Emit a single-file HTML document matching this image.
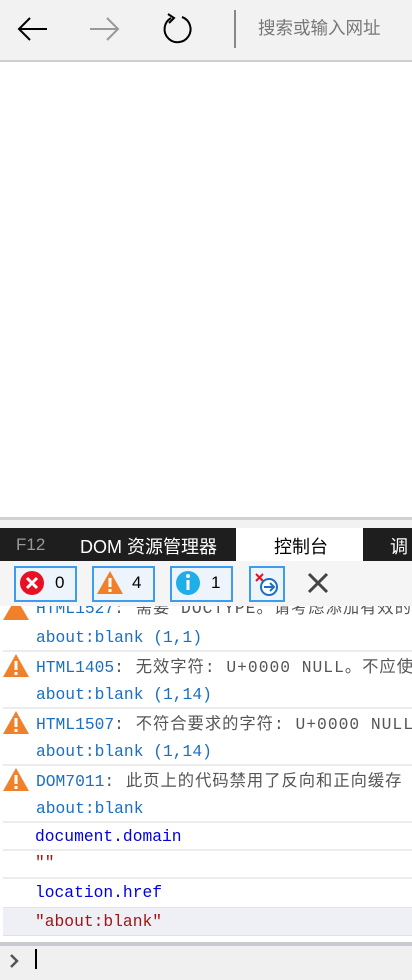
<!DOCTYPE html>
<html><head><meta charset="utf-8"><style>
*{margin:0;padding:0;box-sizing:border-box}
body{width:412px;height:980px;overflow:hidden;background:#fff;font-family:"Liberation Sans","Noto Sans CJK SC",sans-serif;position:relative}
.abs{position:absolute}
.mono{font-family:"Liberation Mono","Noto Sans CJK SC",monospace;font-size:16.3px;white-space:nowrap}
.blue{color:#1a6fc4}.dblue{color:#0000e0}.red{color:#a31515}.gray{color:#555;letter-spacing:1px}
.sep{position:absolute;left:3px;right:0;height:2px;background:#ececec}
.btn{position:absolute;top:566px;height:36px;border:2px solid #3b9cf0;background:#eef4fb}
</style></head><body>
<div class="abs" style="left:0;top:0;width:412px;height:62px;background:#f2f2f2;border-bottom:2px solid #cfcfcf"></div>
<svg class="abs" style="left:0;top:0" width="412" height="62">
<path d="M47 29H19M30 18L19 29L30 40" stroke="#000" stroke-width="2" fill="none"/>
<path d="M90 29H118M107 18L118 29L107 40" stroke="#999" stroke-width="2" fill="none"/>
<path d="M171 18A13 13 0 1 0 182 17" stroke="#000" stroke-width="2" fill="none"/>
<path d="M168 14L174 18L169 23" stroke="#000" stroke-width="2" fill="none"/>
<rect x="234" y="10" width="2" height="38" fill="#888"/>
</svg>
<div class="abs" style="left:258px;top:15px;font-size:17.5px;color:#777">搜索或输入网址</div>
<div class="abs" style="left:0;top:517px;width:412px;height:3px;background:#d0d0d0"></div>
<div class="abs" style="left:0;top:520px;width:412px;height:8px;background:#f2f2f2"></div>
<div class="abs" style="left:0;top:528px;width:412px;height:33px;background:#1e1e1e"></div>
<div class="abs" style="left:236px;top:528px;width:127px;height:33px;background:#fff"></div>
<div class="abs" style="left:16px;top:535px;font-size:17px;color:#999">F12</div>
<div class="abs" style="left:80px;top:533px;font-size:18px;color:#fff">DOM 资源管理器</div>
<div class="abs" style="left:274px;top:533px;font-size:18px;color:#000">控制台</div>
<div class="abs" style="left:390px;top:533px;font-size:18px;color:#fff">调试</div>
<div class="abs" style="left:0;top:561px;width:412px;height:45px;background:#f5f5f5"></div>
<div class="btn" style="left:14px;width:63px"></div>
<div class="btn" style="left:92px;width:63px"></div>
<div class="btn" style="left:170px;width:63px"></div>
<div class="btn" style="left:249px;width:36px"></div>
<svg class="abs" style="left:0;top:561px" width="412" height="45">
<circle cx="32" cy="22" r="12" fill="#e81123"/><path d="M27 17l10 10M37 17l-10 10" stroke="#fff" stroke-width="3"/>
<path d="M110 10L123 33H97Z" fill="#f0812a"/><rect x="108.5" y="17" width="3" height="9" fill="#fff"/><rect x="108.5" y="28" width="3" height="3" fill="#fff"/>
<circle cx="188" cy="22" r="12" fill="#1eaee8"/><rect x="186.5" y="19" width="3" height="10" fill="#fff"/><circle cx="188" cy="15" r="2" fill="#fff"/>
<path d="M256 13l7 7M263 13l-7 7" stroke="#e81123" stroke-width="2"/>
<circle cx="269" cy="26" r="8" fill="#fff" stroke="#1a6fc4" stroke-width="2"/><path d="M264 26h9M270 22l4 4-4 4" stroke="#1a6fc4" stroke-width="2" fill="none"/>
<path d="M309 13l18 18M327 13l-18 18" stroke="#444" stroke-width="3"/>
</svg>
<div class="abs" style="left:55px;top:573px;font-size:17px">0</div>
<div class="abs" style="left:132px;top:573px;font-size:17px">4</div>
<div class="abs" style="left:211px;top:573px;font-size:17px">1</div>
<div class="abs" style="left:0;top:606px;width:412px;height:336px;overflow:hidden">
<svg class="abs" style="left:0;top:0" width="30" height="300">
<path d="M16 -8L29 14H3Z" fill="#f0812a"/>
<path d="M16 48L29 71H3Z" fill="#f0812a"/><rect x="14.5" y="55" width="3" height="9" fill="#fff"/><rect x="14.5" y="66" width="3" height="3" fill="#fff"/>
<path d="M16 105L29 128H3Z" fill="#f0812a"/><rect x="14.5" y="112" width="3" height="9" fill="#fff"/><rect x="14.5" y="123" width="3" height="3" fill="#fff"/>
<path d="M16 162L29 185H3Z" fill="#f0812a"/><rect x="14.5" y="169" width="3" height="9" fill="#fff"/><rect x="14.5" y="180" width="3" height="3" fill="#fff"/>
</svg>
<div class="abs mono" style="left:36px;top:-12px"><span class="blue">HTML1527</span><span class="gray">: 需要 DOCTYPE。请考虑添加有效的</span></div>
<div class="abs mono blue" style="left:36px;top:22px">about:blank (1,1)</div>
<div class="sep" style="top:44px"></div>
<div class="abs mono" style="left:36px;top:47px"><span class="blue">HTML1405</span><span class="gray">: 无效字符: U+0000 NULL。不应使用</span></div>
<div class="abs mono blue" style="left:36px;top:79px">about:blank (1,14)</div>
<div class="sep" style="top:101px"></div>
<div class="abs mono" style="left:36px;top:104px"><span class="blue">HTML1507</span><span class="gray">: 不符合要求的字符: U+0000 NULL。</span></div>
<div class="abs mono blue" style="left:36px;top:136px">about:blank (1,14)</div>
<div class="sep" style="top:158px"></div>
<div class="abs mono" style="left:36px;top:161px"><span class="blue">DOM7011</span><span class="gray">: 此页上的代码禁用了反向和正向缓存</span></div>
<div class="abs mono blue" style="left:36px;top:193px">about:blank</div>
<div class="sep" style="top:215px"></div>
<div class="abs mono dblue" style="left:35px;top:221px">document.domain</div>
<div class="sep" style="top:243px"></div>
<div class="abs mono red" style="left:35px;top:247px">""</div>
<div class="sep" style="top:271px"></div>
<div class="abs mono dblue" style="left:35px;top:277px">location.href</div>
<div class="abs" style="left:3px;top:301px;width:409px;height:29px;background:#eef0f5;border-top:1px solid #e4e4e4;border-bottom:1px solid #e0e0e0"></div>
<div class="abs mono red" style="left:35px;top:306px">"about:blank"</div>
</div>
<div class="abs" style="left:0;top:942px;width:412px;height:4px;background:#c9c9d2"></div>
<div class="abs" style="left:0;top:946px;width:412px;height:34px;background:#f0f0f0"></div>
<svg class="abs" style="left:0;top:946px" width="50" height="34"><path d="M11 9l6 6-6 6" stroke="#555" stroke-width="2.5" fill="none"/><rect x="35" y="3" width="2" height="20" fill="#000"/></svg>
</body></html>
